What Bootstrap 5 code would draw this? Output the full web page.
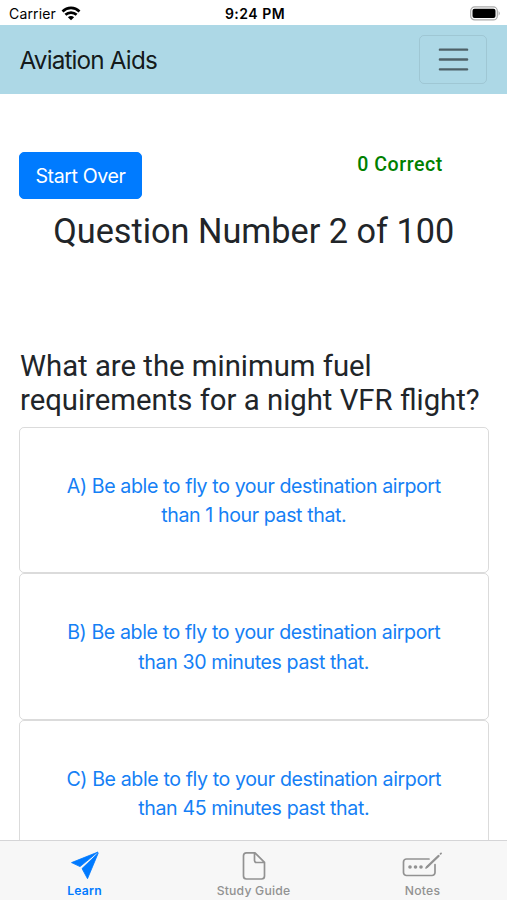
<!DOCTYPE html>
<html lang="en">
<head>
<meta charset="utf-8">
<meta name="viewport" content="width=device-width, initial-scale=1">
<title>Aviation Aids</title>
<link href="https://cdn.jsdelivr.net/npm/bootstrap@5.3.0/dist/css/bootstrap.min.css" rel="stylesheet">
<style>
html { font-size: 19.594px; }
body { font-family: Inter, sans-serif; color: #212529; height: 900px; }
.status-bar { height: 25px; font-size: 14px; color: #000; padding: 2px 6px 0 9px; letter-spacing: .15px; }
.status-bar .clock { font-weight: 600; font-size: 14px; letter-spacing: .5px; }
.top-nav { background: #add8e6; height: 69px; }
.top-nav .navbar-brand { font-size: 24.3px; letter-spacing: -.035em; color: rgba(0,0,0,.9); padding: 7px 0 5px; }
.top-nav .navbar-toggler { border-color: rgba(0,0,0,.08); padding: .25rem .75rem; height: 49px; border-radius: 5px; line-height: 1; }
.top-nav svg { width: 37px; height: 37px; display: block; }
.quiz { padding: 58px 18.5px 0 19px; }
.restart { background: #007bff; border-color: #007bff; height: 46.5px; width: 123px; padding: 2px 0 0; font-size: 19.59px; border-radius: 5px; letter-spacing: -.02em; }
.score { color: green; font-family: Roboto, sans-serif; font-weight: 500; line-height: 24px; width: 177px; letter-spacing: .55px; padding-top: 1px; }
.counter { font-family: Roboto, sans-serif; font-weight: 400; font-size: 34.25px; line-height: 41px; margin: 12px 0 97px; white-space: nowrap; }
.question { font-family: Roboto, sans-serif; font-weight: 400; font-size: 29.3px; line-height: 34.5px; margin: 0 0 9px; padding-left: 1px; white-space: nowrap; }
.answer { height: 146.6px; border: 1.2px solid rgba(0,0,0,.14); border-radius: 5px; }
.answer .btn { color: #1580f5; font-size: 19.59px; line-height: 29.4px; border: 0; padding: 3px 0 0; letter-spacing: -.02em; }
.tabs { height: 60px; background: #f7f7f7; border-top: 1px solid #d5d5d7; color: #929292; font-size: 12.2px; font-weight: 500; line-height: 15px; padding-top: 8px; letter-spacing: .2px; }
.tabs svg { height: 34px; width: 44px; display: block; }
.tabs .current { color: #007aff; font-weight: 600; }
</style>
<script src="https://cdn.jsdelivr.net/npm/bootstrap@5.3.0/dist/js/bootstrap.bundle.min.js"></script>
</head>
<body class="bg-white d-flex flex-column overflow-hidden">
<header class="flex-shrink-0">
  <div class="status-bar row g-0 align-items-center">
    <div class="col d-flex align-items-center gap-1"><span>Carrier</span>
      <svg width="20" height="15" viewBox="0 0 20 15" fill="none" stroke="#000" stroke-width="2.7"><path d="M1.5 5.400C6.400.8 13.600.8 18.500 5.400M4.400 8.800c3.200-3 8-3 11.200 0"/><path d="M10 14.300 6.900 11.200c1.700-1.600 4.500-1.600 6.200 0z" fill="#000" stroke="none"/></svg>
    </div>
    <div class="col-auto clock">9:24 PM</div>
    <div class="col d-flex justify-content-end">
      <svg width="31" height="15" viewBox="0 0 31 15"><rect x=".7" y=".9" width="26.600" height="13" rx="4" fill="#fff" stroke="#aaa" stroke-width="1.200"/><rect x="2.500" y="2.700" width="23" height="9.400" rx="2" fill="#000"/><path d="M28.600 5q2.400 2.400 0 4.800z" fill="#aaa"/></svg>
    </div>
  </div>
  <nav class="navbar top-nav py-0">
    <div class="container-fluid px-3">
      <a class="navbar-brand m-0" href="#">Aviation Aids</a>
      <button class="navbar-toggler" type="button" aria-label="Toggle navigation">
        <svg viewBox="0 0 30 30" fill="none" stroke="rgba(0,0,0,.55)" stroke-width="2" stroke-linecap="round"><path d="M4 7h22M4 15h22M4 23h22"/></svg>
      </button>
    </div>
  </nav>
</header>
<main class="quiz flex-grow-1 overflow-hidden">
  <div class="d-flex justify-content-between align-items-start">
    <button class="btn btn-primary restart" type="button">Start Over</button>
    <div class="score text-center">0 Correct</div>
  </div>
  <h3 class="counter text-center">Question Number 2 of 100</h3>
  <h4 class="question">What are the minimum fuel<br>requirements for a night VFR flight?</h4>
  <div class="answer d-flex align-items-center justify-content-center"><button class="btn" type="button">A) Be able to fly to your destination airport<br>than 1 hour past that.</button></div>
  <div class="answer d-flex align-items-center justify-content-center"><button class="btn" type="button">B) Be able to fly to your destination airport<br>than 30 minutes past that.</button></div>
  <div class="answer d-flex align-items-center justify-content-center"><button class="btn" type="button">C) Be able to fly to your destination airport<br>than 45 minutes past that.</button></div>
</main>
<footer class="tabs row g-0 flex-shrink-0 text-center">
  <div class="col d-flex flex-column align-items-center current">
    <svg viewBox="0 0 44 34" fill="currentColor" stroke="currentColor" stroke-width=".8" stroke-linejoin="round"><path d="M35 3 8.500 13.600 17 17.600z"/><path d="M35.300 3.900 19 19.600 24.500 29.700z"/></svg>
    <span>Learn</span>
  </div>
  <div class="col d-flex flex-column align-items-center">
    <svg viewBox="0 0 44 34" fill="none" stroke="currentColor" stroke-width="1.700" stroke-linejoin="round"><path d="M14.500 3.800h8.500l9.500 9.500V27a3 3 0 0 1-3 3h-15a3 3 0 0 1-3-3V6.800a3 3 0 0 1 3-3zM22.500 4v7.500a2 2 0 0 0 2 2h8"/></svg>
    <span>Study Guide</span>
  </div>
  <div class="col d-flex flex-column align-items-center">
    <svg viewBox="0 0 44 34" fill="none" stroke="currentColor" stroke-width="1.700" stroke-linecap="round"><path d="M28 10H5.500a3 3 0 0 0-3 3v10.500a3 3 0 0 0 3 3H31a3 3 0 0 0 3-3v-8"/><path d="m26 18 11.500-11" stroke-width="2.400"/><path d="m25 19 2-2M39.500 4.900l.6-.6"/><g fill="currentColor" stroke="none"><circle cx="9" cy="18" r="1.800"/><circle cx="14.500" cy="18" r="1.800"/><circle cx="20" cy="18" r="1.800"/></g></svg>
    <span>Notes</span>
  </div>
</footer>
</body>
</html>
